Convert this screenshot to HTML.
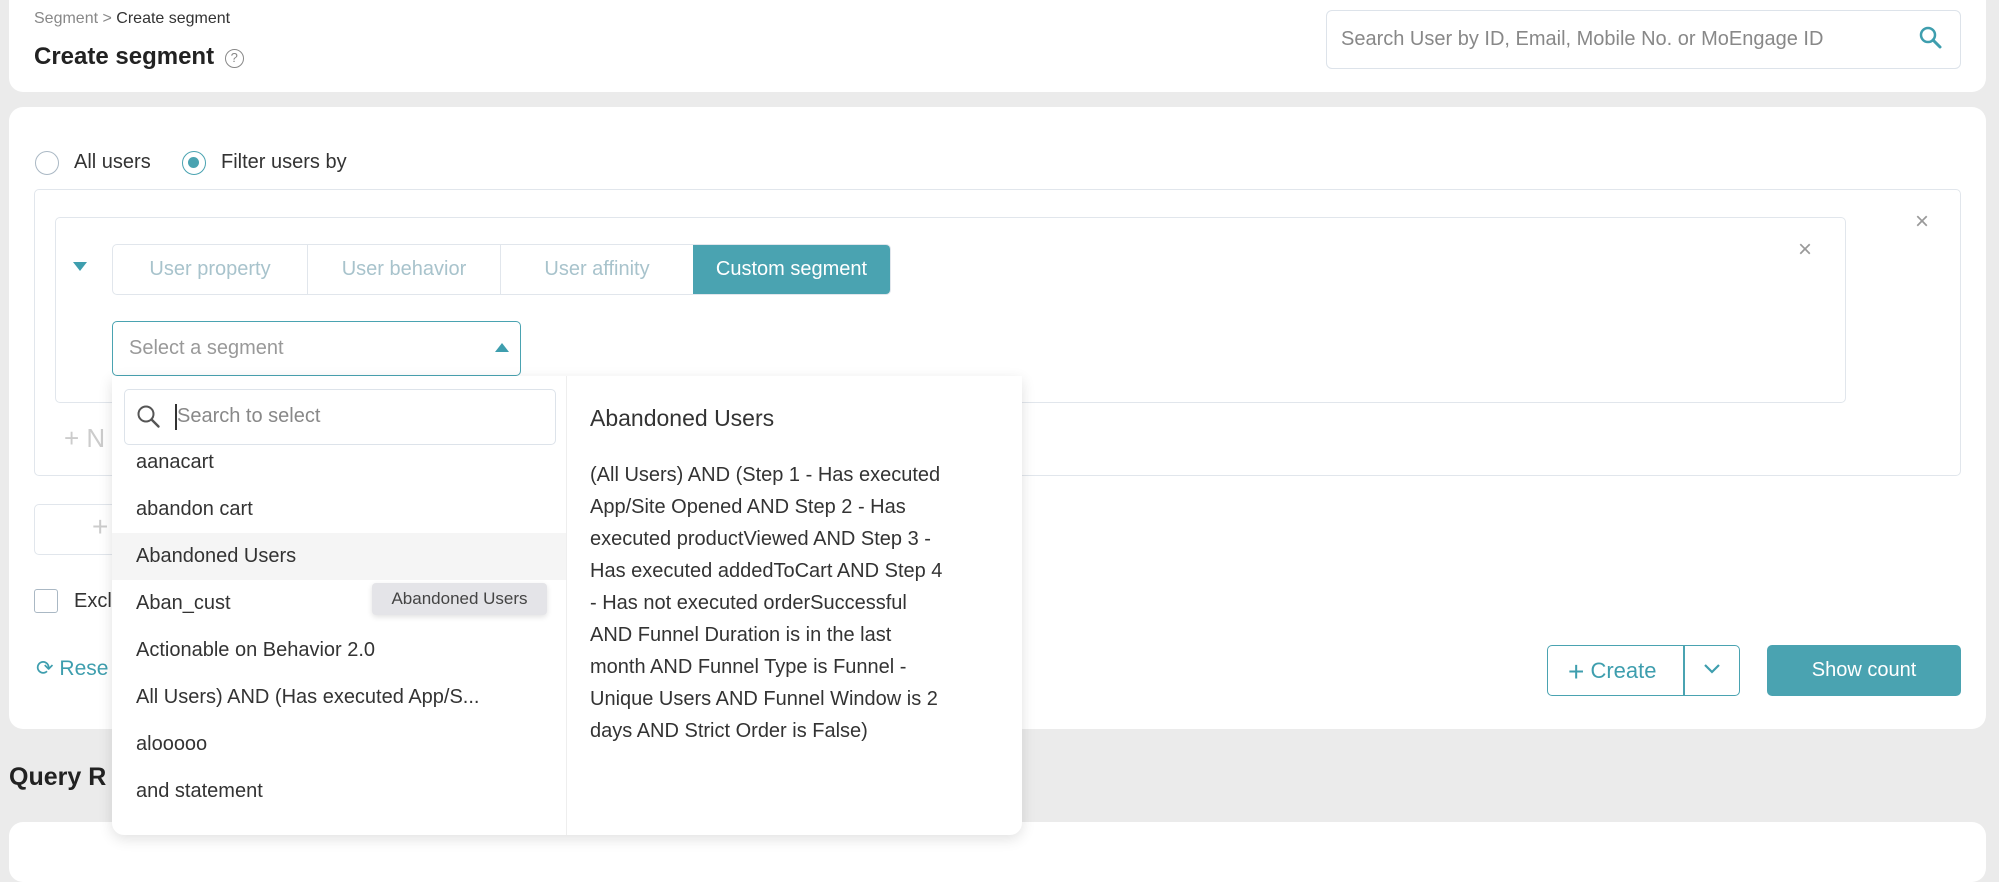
<!DOCTYPE html>
<html><head><meta charset="utf-8"><style>
*{box-sizing:border-box;margin:0;padding:0}
body{width:1999px;height:845px;background:#ebebeb;font-family:"Liberation Sans",sans-serif;color:#333;position:relative;overflow:hidden}
.abs{position:absolute}
.card{position:absolute;background:#fff;border-radius:14px}
.t{position:absolute;white-space:nowrap}
</style></head><body>
<div class="card" style="left:9px;top:-14px;width:1977px;height:106px"></div>
<div class="t" style="left:34px;top:10px;font-size:16px;color:#888">Segment &gt; <span style="color:#333">Create segment</span></div>
<div class="t" style="left:34px;top:43px;font-size:24px;color:#222;font-weight:600">Create segment <span style="display:inline-block;width:19px;height:19px;border:1.5px solid #888;border-radius:50%;font-size:13px;font-weight:normal;color:#888;text-align:center;line-height:16px;vertical-align:2px;margin-left:4px">?</span></div>
<div class="abs" style="left:1326px;top:10px;width:635px;height:59px;border:1.5px solid #dde3ea;border-radius:6px"></div>
<div class="t" style="left:1341px;top:28px;font-size:20px;color:#888">Search User by ID, Email, Mobile No. or MoEngage ID</div>
<svg class="abs" style="left:1918px;top:25px" width="26" height="26" viewBox="0 0 26 26"><circle cx="10" cy="10" r="7" fill="none" stroke="#3e9eae" stroke-width="2.5"/><path d="M15 15l7 7" stroke="#3e9eae" stroke-width="3" stroke-linecap="round"/></svg>

<div class="card" style="left:9px;top:107px;width:1977px;height:622px"></div>
<div class="abs" style="left:35px;top:151px;width:24px;height:24px;border:1.5px solid #aab8c4;border-radius:50%"></div>
<div class="t" style="left:74px;top:151px;font-size:20px">All users</div>
<div class="abs" style="left:182px;top:151px;width:24px;height:24px;border:1.5px solid #4aa3b1;border-radius:50%"><div class="abs" style="left:5px;top:5px;width:11px;height:11px;background:#4aa3b1;border-radius:50%"></div></div>
<div class="t" style="left:221px;top:151px;font-size:20px">Filter users by</div>

<div class="abs" style="left:34px;top:189px;width:1927px;height:287px;border:1.5px solid #e1e6ec;border-radius:5px"></div>
<div class="t" style="left:1915px;top:208px;font-size:24px;color:#999">×</div>
<div class="abs" style="left:55px;top:217px;width:1791px;height:186px;border:1.5px solid #e1e6ec;border-radius:5px"></div>
<div class="t" style="left:1798px;top:236px;font-size:24px;color:#999">×</div>
<svg class="abs" style="left:72px;top:261px" width="16" height="12"><path d="M1 1h14L8 10z" fill="#3e9eae"/></svg>

<div class="abs" style="left:112px;top:244px;width:779px;height:51px;border:1.5px solid #e1e6ec;border-radius:5px;overflow:hidden;display:flex;font-size:20px;color:#a8c3cc">
<div style="width:195px;border-right:1.5px solid #e1e6ec;text-align:center;line-height:48px">User property</div>
<div style="width:193px;border-right:1.5px solid #e1e6ec;text-align:center;line-height:48px">User behavior</div>
<div style="width:192px;text-align:center;line-height:48px">User affinity</div>
<div style="flex:1;background:#4aa3b1;color:#fff;text-align:center;line-height:48px">Custom segment</div></div>

<div class="abs" style="left:112px;top:321px;width:409px;height:55px;border:1.5px solid #4aa3b1;border-radius:5px"></div>
<div class="t" style="left:129px;top:337px;font-size:20px;color:#999">Select a segment</div>
<svg class="abs" style="left:494px;top:342px" width="16" height="11"><path d="M1 10h14L8 1z" fill="#3e9eae"/></svg>

<div class="t" style="left:64px;top:423px;font-size:26px;color:#ccc">+ N</div>
<div class="abs" style="left:34px;top:504px;width:200px;height:51px;border:1.5px solid #e1e6ec;border-radius:5px"></div>
<div class="t" style="left:92px;top:511px;font-size:28px;color:#ccc">+</div>
<div class="abs" style="left:34px;top:589px;width:24px;height:24px;border:1.5px solid #aab8c4;border-radius:3px"></div>
<div class="t" style="left:74px;top:590px;font-size:20px">Excl</div>
<div class="t" style="left:36px;top:656px;font-size:21px;color:#3e9eae">⟳ Rese</div>

<div class="abs" style="left:1547px;top:645px;width:193px;height:51px;border:1.5px solid #4aa3b1;border-radius:5px"></div>
<div class="abs" style="left:1683px;top:645px;width:1.5px;height:51px;background:#4aa3b1"></div>
<div class="t" style="left:1568px;top:656px;font-size:22px;color:#3e9eae"><span style="font-size:28px;vertical-align:-3px">+</span> Create</div>
<svg class="abs" style="left:1703px;top:663px" width="18" height="12"><path d="M2 2l7 7 7-7" fill="none" stroke="#3e9eae" stroke-width="2.2"/></svg>
<div class="abs" style="left:1767px;top:645px;width:194px;height:51px;background:#4aa3b1;border-radius:5px;color:#fff;font-size:20px;text-align:center;line-height:51px">Show count</div>

<div class="t" style="left:9px;top:763px;font-size:25px;font-weight:bold;color:#222">Query R</div>
<div class="card" style="left:9px;top:822px;width:1977px;height:60px"></div>

<div class="abs" style="left:112px;top:376px;width:910px;height:459px;background:#fff;border-radius:0 0 12px 12px;box-shadow:0 4px 14px rgba(0,0,0,.12)"></div>
<div class="abs" style="left:566px;top:376px;width:1px;height:459px;background:#eee"></div>
<div class="abs" style="left:124px;top:389px;width:432px;height:56px;border:1.5px solid #dde3ea;border-radius:5px"></div>
<svg class="abs" style="left:136px;top:404px" width="26" height="26"><circle cx="10" cy="10" r="7.5" fill="none" stroke="#555" stroke-width="2"/><path d="M15.5 15.5l7 7" stroke="#555" stroke-width="2.4" stroke-linecap="round"/></svg>
<div class="abs" style="left:175px;top:404px;width:1.5px;height:26px;background:#333"></div>
<div class="t" style="left:177px;top:405px;font-size:20px;color:#888">Search to select</div>
<div class="abs" style="left:112px;top:533px;width:454px;height:47px;background:#f5f5f5"></div>
<div class="t" style="left:136px;top:450px;font-size:20px;line-height:24px">aanacart</div>
<div class="t" style="left:136px;top:497px;font-size:20px;line-height:24px">abandon cart</div>
<div class="t" style="left:136px;top:544px;font-size:20px;line-height:24px">Abandoned Users</div>
<div class="t" style="left:136px;top:591px;font-size:20px;line-height:24px">Aban_cust</div>
<div class="t" style="left:136px;top:638px;font-size:20px;line-height:24px">Actionable on Behavior 2.0</div>
<div class="t" style="left:136px;top:685px;font-size:20px;line-height:24px">All Users) AND (Has executed App/S...</div>
<div class="t" style="left:136px;top:732px;font-size:20px;line-height:24px">alooooo</div>
<div class="t" style="left:136px;top:779px;font-size:20px;line-height:24px">and statement</div>
<div class="abs" style="left:372px;top:583px;width:175px;height:32px;background:#e4e4e8;border-radius:4px;box-shadow:0 2px 6px rgba(0,0,0,.12);font-size:17px;color:#444;text-align:center;line-height:32px">Abandoned Users</div>

<div class="t" style="left:590px;top:405px;font-size:23px;font-weight:500;color:#333">Abandoned Users</div>
<div class="abs" style="left:590px;top:459px;font-size:20px;line-height:32px;color:#333;white-space:nowrap">(All Users) AND (Step 1 - Has executed<br>App/Site Opened AND Step 2 - Has<br>executed productViewed AND Step 3 -<br>Has executed addedToCart AND Step 4<br>- Has not executed orderSuccessful<br>AND Funnel Duration is in the last<br>month AND Funnel Type is Funnel -<br>Unique Users AND Funnel Window is 2<br>days AND Strict Order is False)</div>
</body></html>
